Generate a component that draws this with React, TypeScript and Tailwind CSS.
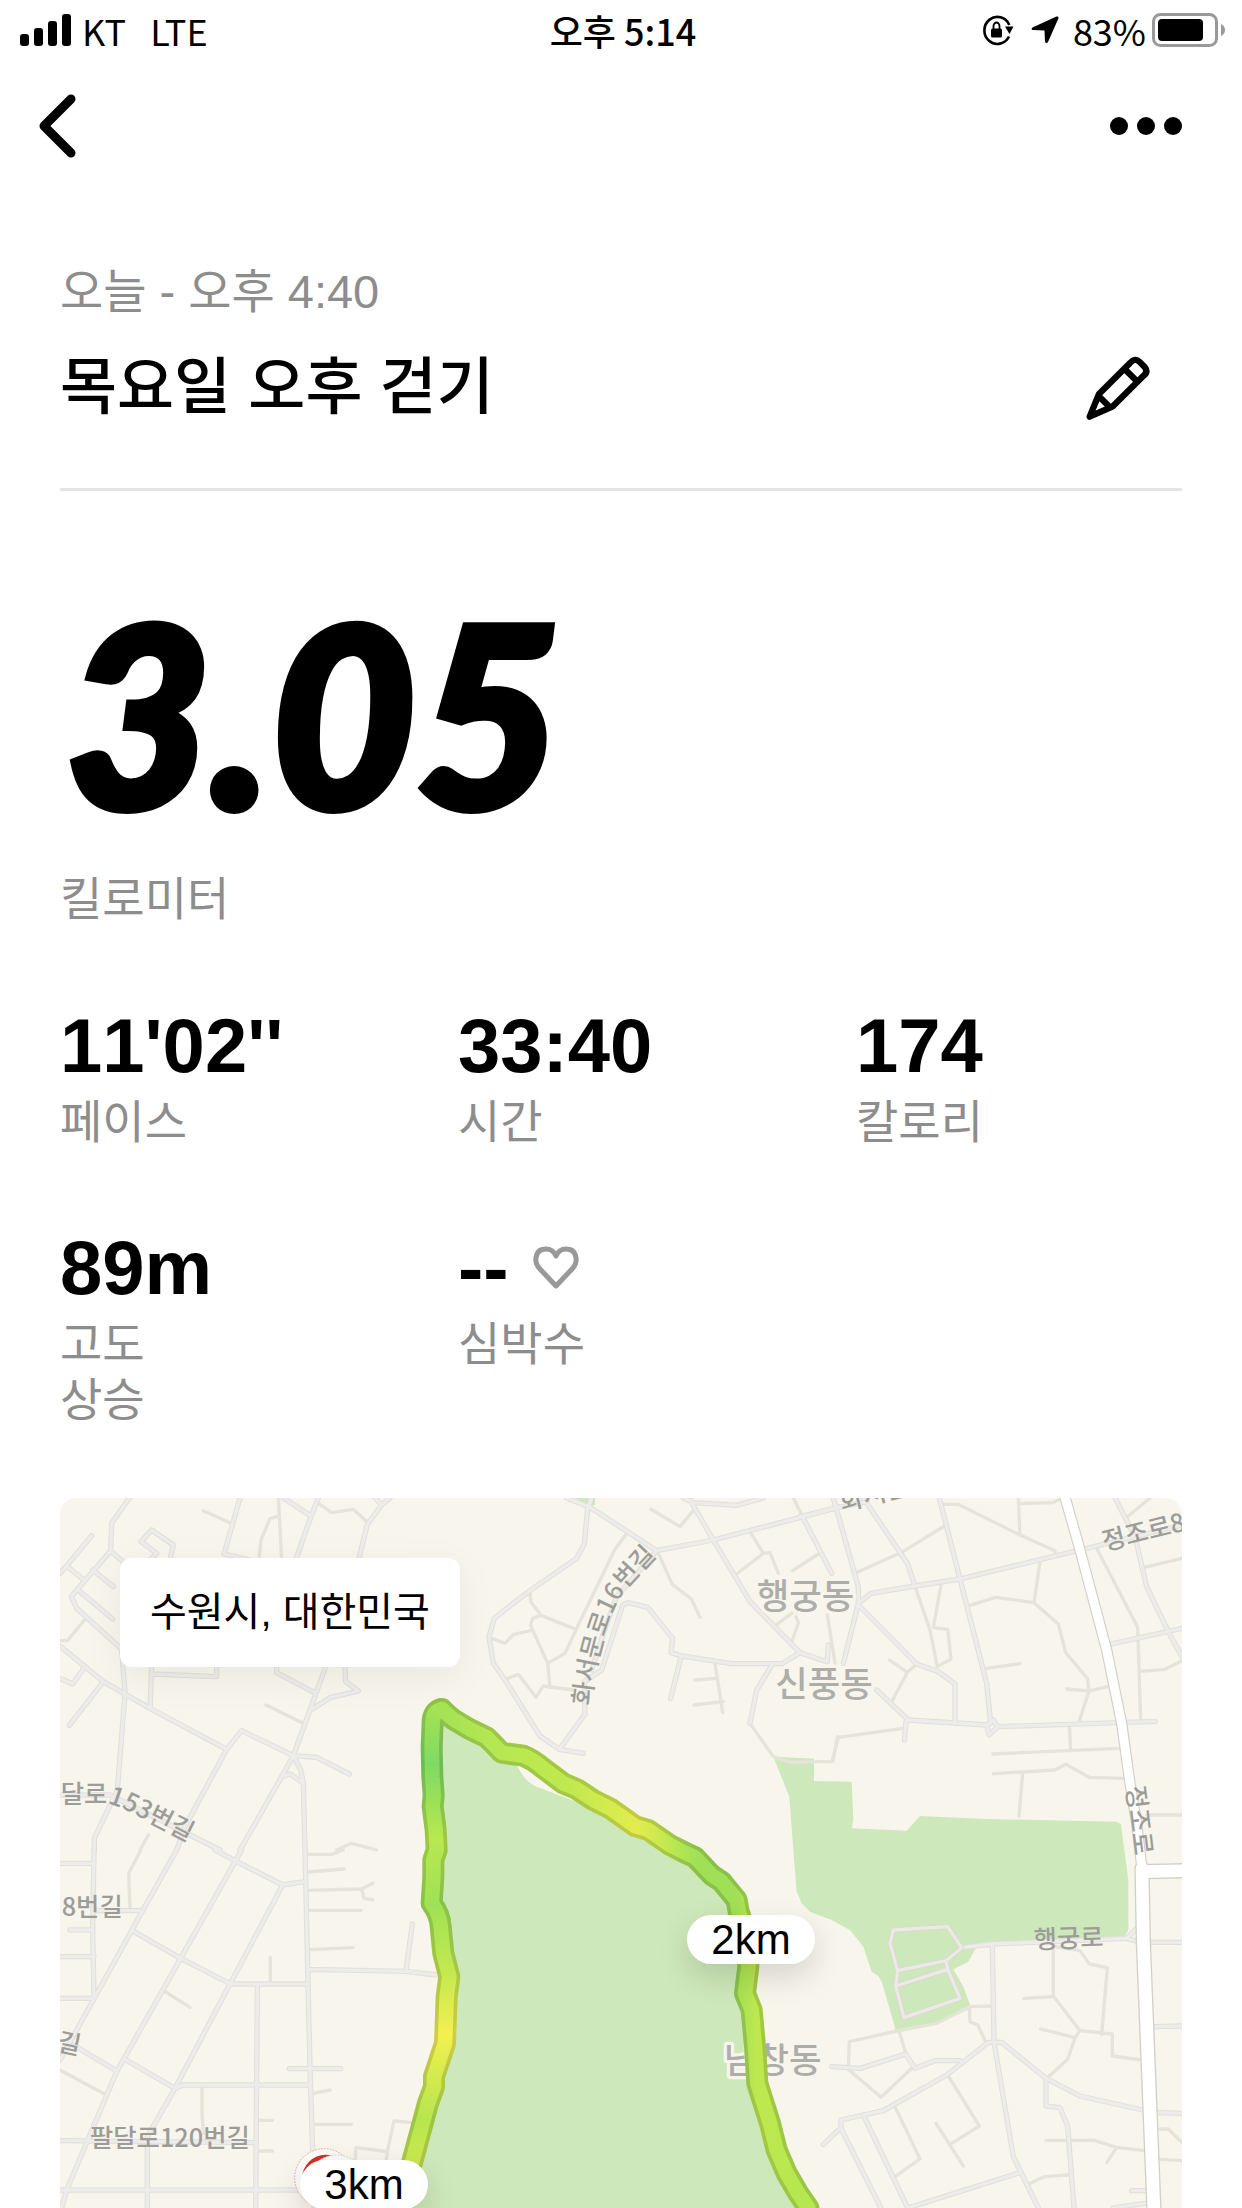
import React from "react";

// One square of the map, its paths are relative to its own origin
interface Tile {
  x: number;
  y: number;
  roads: string;
  alleys: string;
}

interface Stat {
  value: string;
  label: string[];
  heart?: boolean;
}

const tiles: Tile[] = [
  {
    x: 0,
    y: -24,
    roads:
      "M208 24L155 100L152 183L52 298L34 320L50 355L185 478L195 612L172 900L103 1045V1080M152 183L200 225M95 137L20 228L0 250M20 228L70 268M98 240L160 290M52 298L158 387M330 210L340 165L275 120L243 155L290 190L270 210M540 24L492 192L590 215M775 24L753 80L700 230M670 24L753 78M990 24L965 45L922 103L897 205M945 24L965 45M0 468L75 530L130 575L195 612L270 655L500 778L545 722L700 797L770 802L868 852M75 530L38 582L0 565M130 575L28 706M275 530L270 655M275 552L470 560V530M650 530V548L768 610M855 530L857 575L895 603L812 622L752 660M797 530L768 610L750 660L700 797L722 840L730 880L735 1080M728 878L690 852L665 860M700 797L665 860L540 1080M500 778L375 1010L350 1080M0 915H150L390 1035L480 1080",
    alleys:
      "M430 62L510 98M655 24L665 210M655 78L630 86L603 150L597 205M775 40L815 68L880 58L922 97M75 388L22 452H0M618 645L730 700M265 1035L240 1080M830 1080L875 1060L950 1080",
  },
  {
    x: 1140,
    y: -24,
    roads:
      "M380 24L450 52L650 182L820 150L1090 80L1200 50M455 24L443 55L433 162L410 205L270 302L200 355L163 385L147 440L160 520L195 570L300 738L358 778L430 790M358 778L435 672L433 575L485 540L548 345L565 338L623 352L698 445L693 488L725 498L875 521H1025L1080 488L1160 515M1165 465L1162 515M650 182L600 240L530 320L490 430L455 540M730 24L760 38L890 46L970 24M750 30L820 150L930 335L1080 488M1090 85L1175 250M722 505L692 625M998 522L950 600L930 700",
    alleys:
      "M632 57L720 110L760 62M562 128L525 178L410 415L375 490L323 520M270 302L272 335L303 376L408 418M303 376L278 385L272 405L278 420L323 520L330 592M278 420L220 434L195 460L150 443M195 568L235 553L288 622L310 588L400 600M655 190L697 283L755 328L780 382M930 125L970 190L890 252M970 190L990 188L1015 250M1058 242L1135 192M1060 24L1090 85M1008 405L1055 370M1068 380L1075 398L1052 465M1162 375L1185 520M825 520L848 668M765 570L830 565M762 645L850 635M930 700L1000 800L1050 817L1178 814L1193 740",
  },
  {
    x: 2220,
    y: -24,
    roads:
      "M0 80L105 55L200 35M100 24L175 290V340L130 520M190 24L322 220L345 288M175 340L213 310L345 288L480 267L840 180L1146 105M418 24L480 267L560 580L572 700M175 345L350 522L415 545L465 582V695M230 600L325 690L560 705L580 690L593 710L1065 694M560 705L567 735L593 710M318 695L313 750M945 24L1005 140L1040 290L1105 425L1146 500M920 465L1146 415",
    alleys:
      "M168 248L305 187L433 108M425 43H475L660 135L765 182V200M655 24L660 135M655 41L760 38L785 24M890 175L1013 412L1022 690M1030 233L1146 205M1020 544L1095 538L1146 512M985 78L1050 24M510 346L587 322L702 338L775 402L797 488L862 565L867 603L838 692M867 603L800 597M867 603L922 590M720 215L702 338M345 290L390 420L412 530L453 507L443 418L400 413L423 285M268 510L322 547L275 635M322 547L350 522M555 536L660 521M310 715L115 742L97 814M578 792L958 775M808 705L812 780M580 851L765 840L798 823L868 862L972 865M668 850L657 978M1040 975H1146",
  },
  {
    x: 0,
    y: 1056,
    roads:
      "M0 40H102M102 0L98 240L102 445M0 445H100M0 320H102M30 240H98M110 182H248M350 0L248 182L100 450L0 630M545 0L525 35L362 325L170 665L20 1020L5 1074M465 0L525 32L668 105L735 95M668 105L510 402L345 715L262 860V1074M222 245L362 325L512 402H742M592 402L587 1074M735 0L750 655L758 900L762 1074M40 585L170 663M198 630L345 715L370 705H752M688 656H842M0 872L580 878M0 1020H720M745 358L1040 364L1130 375M1038 362L1057 222",
    alleys:
      "M740 13H815L850 0M742 66L852 57M742 121L905 117L938 100M905 117L912 145L938 149M745 181H903M745 299L880 293M631 322V395M312 423L390 472M0 660L133 732M426 710V790L430 850M595 811H638M595 903H638M760 730L810 720M760 823H875M885 930L888 893L982 905L1002 813L1055 818M982 905L978 935M243 0L206 70L210 175",
  },
  {
    x: 2220,
    y: 1056,
    roads:
      "M485 293L575 282L980 265L1015 230M980 265L1015 275M1055 277H1146M1065 530L1146 528M1075 788L1146 790M577 285L582 577L640 920L715 1074M95 650L180 655L317 612L345 655L405 632H480M70 883L123 833V810L190 795L250 782L440 675L565 577H605L738 685L840 738L1028 780M123 835L243 1074M190 795L323 1074L660 968M738 685V768L780 773L803 828L822 1074M940 1074L1035 1060M995 1022H1040",
    alleys:
      "M760 300V438L840 542L937 552V618L1025 630M672 445L760 440M722 537L825 563L803 628L740 685M840 542L825 563M765 290L840 302L868 342L922 353L905 553M573 468L510 470L410 520L290 543L148 575L145 658L243 742L335 655M298 545L318 612M508 475L510 515L533 525L558 577M445 678L538 828L450 883M408 820L490 948M285 770L360 927L285 980M738 871H883L950 892L1028 901M950 892L920 938M685 1003L732 980L805 975M1080 837H1105L1146 878M1080 928L1146 932",
  },
];

const ROUTE_WEST =
  "M1145 633Q1118 640 1118 672L1115 746L1117 836L1121 891L1118 926L1127 996L1130 1056L1120 1086V1136L1115 1216Q1140 1250 1142 1285L1150 1366L1168 1436L1160 1496L1155 1636L1122 1736V1766L1104 1816L1050 2016L1030 2076";
const ROUTE_EAST =
  "M1145 633Q1162 650 1180 664L1225 691L1280 718Q1300 738 1325 764L1390 773Q1420 785 1450 811L1510 856L1550 873L1600 906L1650 931L1725 984L1765 996L1830 1041L1875 1064L1905 1078L1955 1131L1985 1151L2030 1206L2036 1241L2065 1326V1406L2055 1486L2075 1536L2085 1646L2092 1756L2130 1876L2150 1956L2180 2026L2215 2086L2245 2130";
const MAIN_ROAD =
  "M3013 -10L3060 156L3140 456L3185 676L3210 856L3230 976L3246 1112L3250 1330L3282 2130";

const stats: Stat[] = [
  { value: "11'02''", label: ["페이스"] },
  { value: "33:40", label: ["시간"] },
  { value: "174", label: ["칼로리"] },
  { value: "89m", label: ["고도", "상승"] },
  { value: "--", label: ["심박수"], heart: true },
];

const StatusBar = () => {
  return (
    <div className="flex items-center h-[60px] pl-5 pr-4 font-['Noto_Sans_CJK_KR',sans-serif] text-[36px] leading-[58px]">
      <div className="flex-1 flex items-center">
        <svg viewBox="0 0 52 32" className="w-[52px] h-8" aria-label="signal">
          <rect x="0" y="20" width="9" height="12" rx="3" />
          <rect x="14" y="14" width="9" height="18" rx="3" />
          <rect x="28" y="7" width="9" height="25" rx="3" />
          <rect x="42" y="0" width="9" height="32" rx="3" />
        </svg>
        <span className="ml-2.5">KT</span>
        <span className="ml-6">LTE</span>
      </div>
      <time className="font-medium">오후 5:14</time>
      <div className="flex-1 flex items-center justify-end">
        <svg viewBox="0 0 34 32" className="w-[34px] h-8 mr-4" aria-label="rotation lock">
          <path
            d="M28 22.500A13 13.500 0 1 1 28.300 11"
            fill="none"
            stroke="#000"
            strokeWidth="2.600"
          />
          <path d="M24 12.500L32.500 12.500L28.500 20Z" />
          <rect x="10" y="14.500" width="11" height="9" rx="1.500" />
          <path
            d="M12.500 15V12a3 3.500 0 0 1 6 0v3"
            fill="none"
            stroke="#000"
            strokeWidth="1.800"
          />
        </svg>
        <svg viewBox="0 0 28 28" className="w-7 h-7 mr-3.5" aria-label="location">
          <path d="M1.500 11.500L25.500 .6Q28 0 27.400 2.500L17 26Q15 28.500 14 25.500L13.500 14.500L2 14Q-.5 13.300 1.500 11.500Z" />
        </svg>
        <span>83%</span>
        <svg viewBox="0 0 74 34" className="w-[74px] h-[34px] ml-1.5" aria-label="battery">
          <rect x="1.500" y="1.500" width="63" height="31" rx="7" fill="none" stroke="#999" strokeWidth="3" />
          <rect x="6" y="6" width="45" height="22" rx="4" />
          <path d="M69 11Q73 13 73 17T69 23Z" fill="#999" />
        </svg>
      </div>
    </div>
  );
};

const RouteMap = () => {
  return (
    <svg
      viewBox="0 0 3366 2130"
      className="block w-full font-['Noto_Sans_CJK_KR',sans-serif]"
      aria-label="route map"
    >
      <defs>
        <linearGradient id="paceWest" gradientUnits="userSpaceOnUse" x1="0" y1="630" x2="0" y2="2030">
          <stop offset="0" stopColor="#a5e255" />
          <stop offset=".12" stopColor="#7fda64" />
          <stop offset=".2" stopColor="#9be157" />
          <stop offset=".28" stopColor="#b9e84f" />
          <stop offset=".42" stopColor="#9fe156" />
          <stop offset=".55" stopColor="#bfe850" />
          <stop offset=".7" stopColor="#f3f04f" />
          <stop offset=".79" stopColor="#d4ea4e" />
          <stop offset=".88" stopColor="#b6e64f" />
          <stop offset="1" stopColor="#d0e84d" />
        </linearGradient>
        <linearGradient id="paceEast" gradientUnits="userSpaceOnUse" x1="1145" y1="0" x2="2245" y2="0">
          <stop offset="0" stopColor="#a5e255" />
          <stop offset=".14" stopColor="#b5e752" />
          <stop offset=".35" stopColor="#c0e94f" />
          <stop offset=".53" stopColor="#e3ec4d" />
          <stop offset=".62" stopColor="#c0e850" />
          <stop offset=".7" stopColor="#9fe056" />
          <stop offset=".8" stopColor="#a0e056" />
          <stop offset=".86" stopColor="#bfe84f" />
          <stop offset="1" stopColor="#b4e750" />
        </linearGradient>
        <path id="streetNorth" d="M1592 624Q1606 490 1646 376Q1668 310 1706 264L1820 140" />
        <path id="streetWest" d="M2 914H130Q165 918 235 955L440 1060" />
      </defs>

      <rect width="3366" height="2130" fill="#f8f5ec" />

      {/* parks */}
      <g fill="#cde8ba">
        <path d="M1545 0L1585 26L1605 21V0Z" />
        <path d="M1145 650L1225 691L1325 764L1390 773L1510 856L1650 931L1765 996L1905 1078L2030 1206L2065 1326L2055 1486L2092 1756L2245 2130H1020L1050 2016L1122 1766L1155 1636L1168 1436L1115 1216L1120 891Z" />
        <path d="M2140 776L2262 782V849L2375 851L2380 966L2375 991L2540 998L2580 954L2780 963L3170 971L3183 979L3193 1056L3205 1146V1296L3195 1314L2750 1346L2725 1391L2680 1414L2710 1466L2730 1521L2630 1576L2508 1598L2465 1451L2455 1434L2435 1421L2410 1346L2370 1296L2315 1266L2250 1241L2225 1216L2210 1181L2200 1056L2188 896Z" />
      </g>
      <path d="M1365 790Q1390 850 1430 866L1560 916L1670 972L1760 1000L1600 880Z" fill="#f8f5ec" />

      <g fill="none" strokeLinecap="round" strokeLinejoin="round">
        {tiles.map((tile, i) => (
          <path
            key={i}
            d={tile.alleys}
            transform={`translate(${tile.x} ${tile.y})`}
            stroke="#e5e4d9"
            strokeWidth="10"
          />
        ))}
        {tiles.map((tile, i) => (
          <path
            key={i}
            d={tile.roads}
            transform={`translate(${tile.x} ${tile.y})`}
            stroke="#e0dfd9"
            strokeWidth="16"
          />
        ))}
        {tiles.map((tile, i) => (
          <path
            key={i}
            d={tile.roads}
            transform={`translate(${tile.x} ${tile.y})`}
            stroke="#edecea"
            strokeWidth="10"
          />
        ))}
        {/* paths inside the palace park */}
        <path
          d="M2500 1296L2663 1286L2705 1349L2658 1388L2513 1418L2490 1336ZM2513 1418L2507 1464L2532 1559L2700 1501L2663 1414L2507 1464M2658 1388L2663 1414"
          stroke="#d9d9cd"
          strokeWidth="15"
        />
        <path
          d="M2500 1296L2663 1286L2705 1349L2658 1388L2513 1418L2490 1336ZM2513 1418L2507 1464L2532 1559L2700 1501L2663 1414L2507 1464M2658 1388L2663 1414"
          stroke="#ece9e6"
          strokeWidth="10"
        />
        <path d={MAIN_ROAD} stroke="#d3d0ca" strokeWidth="34" />
        <path d="M3250 1121L3380 1118" stroke="#d3d0ca" strokeWidth="46" />
        <path d="M3246 1112L3250 1330L3282 2140" stroke="#d3d0ca" strokeWidth="46" />
        <path d={MAIN_ROAD} stroke="#fff" strokeWidth="27" />
        <path d="M3250 1121L3380 1118" stroke="#fff" strokeWidth="38" />
        <path d="M3246 1112L3250 1330L3282 2140" stroke="#fff" strokeWidth="38" />
      </g>

      {/* district names */}
      <g
        fill="#adadaa"
        stroke="#f8f5ec"
        strokeWidth="20"
        strokeLinejoin="round"
        paintOrder="stroke"
        fontSize="106"
        fontWeight="500"
      >
        <text x="2090" y="334">행궁동</text>
        <text x="2146" y="596">신풍동</text>
        <text x="1992" y="1725">남창동</text>
      </g>

      {/* street names */}
      <g fill="#9c9c99" fontSize="76" fontWeight="500">
        <text>
          <textPath href="#streetNorth">화서문로16번길</textPath>
        </text>
        <text>
          <textPath href="#streetWest">달로153번길</textPath>
        </text>
        <text x="5" y="1255">8번길</text>
        <text transform="translate(-12 1656) rotate(12)">길</text>
        <text x="90" y="1946">팔달로120번길</text>
        <text transform="translate(2347 40) rotate(-14)">화서문로</text>
        <text transform="translate(3134 158) rotate(-14)">정조로8</text>
        <text transform="translate(2922 1352) rotate(-2)">행궁로</text>
        <text transform="translate(3199 866) rotate(83)">정조로</text>
      </g>

      {/* walked route, coloured by pace */}
      <g fill="none" strokeLinecap="round" strokeLinejoin="round">
        <path d={ROUTE_WEST} stroke="url(#paceWest)" strokeWidth="66" />
        <path d={ROUTE_EAST} stroke="url(#paceEast)" strokeWidth="66" />
        <path d={ROUTE_WEST + ROUTE_EAST} stroke="#000" strokeOpacity=".14" strokeWidth="66" />
        <path d={ROUTE_WEST} stroke="url(#paceWest)" strokeWidth="44" />
        <path d={ROUTE_EAST} stroke="url(#paceEast)" strokeWidth="44" />
      </g>

      {/* finish and start markers */}
      <circle cx="792" cy="2040" r="88" fill="#fafafa" stroke="#f0a5a0" strokeWidth="3" strokeDasharray="5 4" />
      <circle cx="798" cy="2042" r="72" fill="#d92a20" />
      <circle cx="829" cy="2060" r="89" fill="#fafafa" stroke="#c5e8ae" strokeWidth="3" strokeDasharray="5 4" />
    </svg>
  );
};

const App = () => {
  return (
    <div className="bg-white text-black font-['Liberation_Sans','Noto_Sans_CJK_KR',sans-serif]">
      <StatusBar />

      <header className="flex items-center justify-between h-[132px] pl-[34px] pr-8">
        <button type="button" aria-label="뒤로" className="p-1">
          <svg viewBox="0 0 38 64" className="w-[38px] h-16">
            <path
              d="M33 5L6 32L33 59"
              fill="none"
              stroke="#000"
              strokeWidth="9"
              strokeLinecap="round"
              strokeLinejoin="round"
            />
          </svg>
        </button>
        <button type="button" aria-label="더 보기" className="flex gap-[9px] py-5 pr-7">
          <span className="size-[18px] rounded-full bg-black" />
          <span className="size-[18px] rounded-full bg-black" />
          <span className="size-[18px] rounded-full bg-black" />
        </button>
      </header>

      <main className="px-[60px] pt-[70px]">
        <p className="text-[47px] leading-[60px] text-[#8d8d8d]">오늘 - 오후 4:40</p>
        <div className="flex items-center justify-between mt-6 pb-[58px] border-b-3 border-[#e5e5e5]">
          <h1 className="text-[62px] leading-[84px] font-medium">목요일 오후 걷기</h1>
          <button type="button" aria-label="제목 편집" className="mr-8">
            <svg viewBox="136 104 192 192" className="size-16">
              <path
                d="M147 286L175 218L268 125Q283 108 297 122L312 137Q323 151 310 162L215 256ZM255 146L288 179M176 226L207 257"
                fill="none"
                stroke="#000"
                strokeWidth="19"
                strokeLinejoin="round"
              />
            </svg>
          </button>
        </div>

        <p className="mt-[92px] pl-1.5 text-[250px] leading-[256px] font-black italic font-['Lato',sans-serif] [-webkit-text-stroke:8px_black]">
          3.05
        </p>
        <p className="mt-8 text-[46px] leading-[56px] text-[#8d8d8d]">킬로미터</p>

        <dl className="grid grid-cols-3 gap-x-18 gap-y-[78px] mt-[79px]">
          {stats.map((stat) => (
            <div key={stat.value} className="flex flex-col-reverse justify-end gap-2">
              <dt className="text-[46px] leading-[56px] text-[#8d8d8d]">
                {stat.label.map((line) => (
                  <span key={line} className="block">
                    {line}
                  </span>
                ))}
              </dt>
              <dd className="flex items-center text-[76px] leading-[80px] font-bold [font-kerning:none]">
                {stat.value}
                {stat.heart && (
                  <svg viewBox="0 0 46 44" className="w-[46px] h-11 ml-6">
                    <path
                      d="M23 40L6 22Q2 17 3 12Q4 3 13 3Q20 3 23 10Q26 3 33 3Q42 3 43 12Q44 17 40 22Z"
                      fill="none"
                      stroke="#999"
                      strokeWidth="5"
                      strokeLinejoin="round"
                    />
                  </svg>
                )}
              </dd>
            </div>
          ))}
        </dl>

        <section className="relative mt-[70px] rounded-t-2xl overflow-hidden">
          <RouteMap />
          <p className="absolute left-[60px] top-[60px] px-[30px] rounded-xl bg-white text-[40px] leading-[109px] shadow-[0_10px_40px_rgba(0,0,0,0.06)]">
            수원시, 대한민국
          </p>
          <span className="absolute left-[627px] top-[417px] w-32 rounded-full bg-white text-center text-[42px] leading-[49px] shadow-[0_12px_32px_rgba(0,0,0,0.14)]">
            2km
          </span>
          <span className="absolute left-[240px] top-[662px] w-32 rounded-full bg-white text-center text-[42px] leading-[49px] shadow-[0_12px_32px_rgba(0,0,0,0.14)]">
            3km
          </span>
        </section>
      </main>
    </div>
  );
};

export default App;
